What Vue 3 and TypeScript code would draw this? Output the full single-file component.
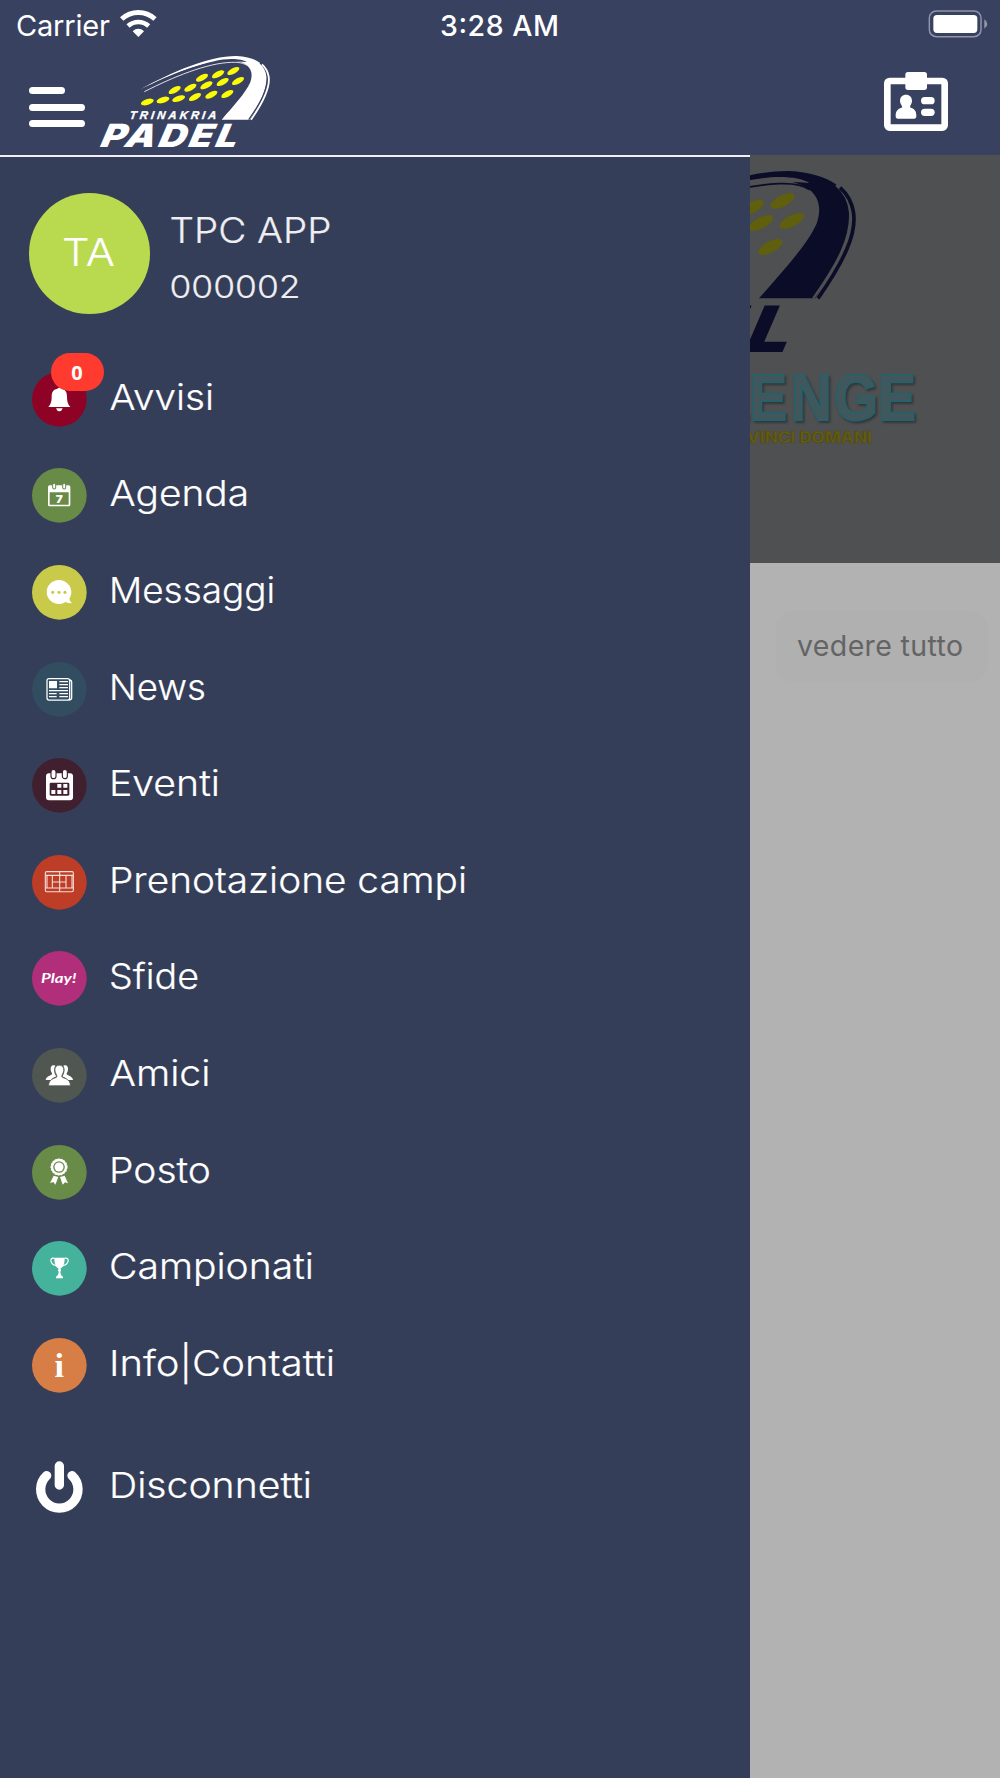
<script setup lang="ts">
interface MenuItem {
  id: string
  label: string
  color: string
  x: number
  width: number
}

const items: MenuItem[] = [
  { id: 'bell', label: 'Avvisi', color: '#8e0325', x: 9.5, width: 104.5 },
  { id: 'agenda', label: 'Agenda', color: '#698b48', x: 9.5, width: 139.5 },
  { id: 'chat', label: 'Messaggi', color: '#caca4a', x: 9, width: 166 },
  { id: 'news', label: 'News', color: '#324d60', x: 9, width: 97 },
  { id: 'events', label: 'Eventi', color: '#40202f', x: 9, width: 111 },
  { id: 'court', label: 'Prenotazione campi', color: '#be3d27', x: 9, width: 358 },
  { id: 'play', label: 'Sfide', color: '#b12f7a', x: 9, width: 90 },
  { id: 'friends', label: 'Amici', color: '#505650', x: 9.5, width: 101 },
  { id: 'medal', label: 'Posto', color: '#698b48', x: 9, width: 102 },
  { id: 'cup', label: 'Campionati', color: '#45b29b', x: 9, width: 205 },
  { id: 'info', label: 'Info|Contatti', color: '#d67e46', x: 9, width: 226 },
]

const balls: [number, number][] = [
  [172, 171], [219, 165], [266, 161], [315, 156], [364, 149], [412, 147],
  [254, 135], [301, 128], [349, 121], [398, 111], [444, 108],
  [336, 98], [384, 88], [430, 78],
]

const prize = { title: 'LENGE', note: 'VINCI DOMANI' }
</script>

<template>
  <div class="screen">
    <svg width="0" height="0" class="defs">
      <defs>
        <g id="racket">
          <path class="body" d="M150 134C245 80 360 32 440 33C505 37 535 62 531 105C526 146 505 180 479 224H395C430 184 466 145 481 112C494 74 474 51 425 46C350 46 248 85 150 134Z" />
          <path class="cut" d="M158 132C255 83 360 42 425 42C445 42 462 45 470 51C370 40 270 86 158 132Z" />
          <path class="line" d="M163 140C250 96 350 54 425 52C447 51 462 55 470 61" />
          <path class="cut wide" d="M476 224C514 170 533 133 531 95C529 75 521 63 510 54" />
          <path class="line thick" d="M483 224C522 168 541 127 536 95C533 76 525 66 516 58" />
          <ellipse v-for="(b, i) in balls" :key="i" class="ball" rx="20" ry="8.5"
            :transform="`translate(${b[0]} ${b[1]}) rotate(${i < 3 ? -18 : -28})`" />
          <text class="padel" x="0" y="0" textLength="418" lengthAdjust="spacingAndGlyphs" transform="translate(29 305) skewX(-13)">PADEL</text>
        </g>
      </defs>
    </svg>

    <header class="top">
      <div class="status">
        <div class="carrier">
          <svg width="104" height="44"><text x="16" y="35.5" textLength="94" class="st">Carrier</text></svg>
          <svg class="wifi" viewBox="0 0 110 82" width="36.7" height="27.3">
            <path d="M5 27C34 1 76 1 105 27" fill="none" stroke="#fff" stroke-width="15" />
            <path d="M24 48C42 32 68 32 86 48" fill="none" stroke="#fff" stroke-width="14" />
            <path d="M38 64C48 54 62 54 72 64L55 81Z" fill="#fff" />
          </svg>
        </div>
        <svg class="clock" width="124" height="44"><text x="1" y="35.5" textLength="119" class="st time">3:28 AM</text></svg>
        <svg class="battery" viewBox="0 0 180 84" width="60" height="28">
          <rect x="4" y="3" width="155" height="77" rx="21" fill="none" stroke="#8f95a6" stroke-width="4.5" />
          <rect x="16" y="15" width="132" height="54" rx="11" fill="#fff" />
          <path d="M169 28Q178 34 178 42T169 56Z" fill="#9499aa" />
        </svg>
      </div>
      <div class="bar">
        <div class="burger"><i class="short"></i><i></i><i></i></div>
        <svg class="logo" viewBox="0 0 570 330" width="190" height="110">
          <use href="#racket" />
          <text class="tri" textLength="260" transform="translate(118 223) skewX(-8)">TRINAKRIA</text>
        </svg>
        <svg class="card" viewBox="0 0 192 177" width="64" height="59">
          <rect x="10" y="27" width="172" height="140" rx="7" fill="none" stroke="#fff" stroke-width="20" />
          <rect x="64" y="0" width="65" height="54" rx="8" fill="#fff" />
          <path d="M48 87C48 75 55 68 66 68S84 75 84 87C84 95 79 98 78 106C91 111 97 116 97 132Q97 140 90 140H42Q35 140 35 132C35 116 42 111 55 106C53 98 48 95 48 87Z" fill="#fff" />
          <rect x="111" y="75" width="41" height="22" rx="11" fill="#fff" />
          <rect x="111" y="110" width="41" height="22" rx="11" fill="#fff" />
        </svg>
      </div>
    </header>

    <main class="below">
      <aside class="drawer">
        <div class="profile">
          <div class="avatar">
            <svg width="121" height="121"><text x="33" y="73" textLength="53" lengthAdjust="spacingAndGlyphs" class="label initials">TA</text></svg>
          </div>
          <svg class="who" width="300" height="121">
            <text x="19.5" y="50.2" textLength="162" lengthAdjust="spacingAndGlyphs" class="label">TPC APP</text>
            <text x="19.500" y="104.500" textLength="131" lengthAdjust="spacingAndGlyphs" class="label code">000002</text>
          </svg>
        </div>

        <nav>
          <div v-for="it in items" :key="it.id" class="row">
            <div class="icon">
              <svg viewBox="-82 -82 164 164" width="54.7" height="54.7" fill="#fff">
                <circle r="82" :fill="it.color" />
                <g v-if="it.id === 'bell'">
                  <path d="M-6 -32Q0 -38 6 -32C19 -29 23 -21 23 -8C23 8 26 14 33 23H-33C-26 14 -23 8 -23 -8C-23 -21 -19 -29 -6 -32Z" />
                  <path d="M-10 27H10Q7 36 0 36T-10 27Z" />
                </g>
                <g v-else-if="it.id === 'agenda'">
                  <path fill-rule="evenodd" d="M-29 -30H28Q33 -30 33 -25V28Q33 33 28 33H-29Q-34 33 -34 28V-25Q-34 -30 -29 -30ZM-29 -9V28.500H28V-9Z" />
                  <g :stroke="it.color" stroke-width="3"><rect x="-20" y="-36" width="9" height="17" rx="4.500" /><rect x="10" y="-36" width="9" height="17" rx="4.500" /></g>
                  <text class="seven" x="-11" y="22" textLength="21" lengthAdjust="spacingAndGlyphs">7</text>
                </g>
                <g v-else-if="it.id === 'chat'">
                  <path d="M-1 -37C20 -37 36 -20 36 0C36 8 33 14 30 19Q31 27 38 33Q27 33 18 29C12 33 6 35 -1 35C-21 35 -38 19 -38 -1S-21 -37 -1 -37Z" />
                  <g :fill="it.color"><circle cx="-20" r="4.6" /><circle cx="-1" r="4.6" /><circle cx="17" r="4.6" /></g>
                </g>
                <g v-else-if="it.id === 'news'" fill="none" stroke="#fff" stroke-width="3.8">
                  <rect x="-37" y="-32" width="68" height="64" rx="6" />
                  <path d="M30 -28Q37 -28 37 -21V25Q37 32 28 32" />
                  <path fill="#fff" d="M-29 -23H-9V-5H-29Z" />
                  <path d="M0 -23H26M0 -14H26M0 -5H26M-31 4H26M-31 13H-8M0 13H26M-31 22H-8M0 22H26" />
                </g>
                <g v-else-if="it.id === 'events'">
                  <rect x="-40" y="-36" width="81" height="81" rx="9" />
                  <g :stroke="it.color" stroke-width="3.5"><rect x="-25" y="-48" width="15" height="28" rx="7.5" /><rect x="9" y="-48" width="15" height="28" rx="7.5" /></g>
                  <rect x="-29" y="-8" width="59" height="39" rx="4" :fill="it.color" />
                  <path d="M-6 -4H6V7H-6ZM12 -4H24V7H12ZM-24 14H-12V26H-24ZM-6 14H6V26H-6ZM12 14H24V26H12Z" />
                </g>
                <g v-else-if="it.id === 'court'" fill="none" stroke="#f7ddd8" stroke-width="3.3">
                  <rect x="-42" y="-32" width="84" height="60" rx="4" />
                  <path d="M-42 -21H42M-42 17H42M-21 -21V17M20 -21V17M1 -32V28M-21 -1H20M-37 -21V17M38 -21V17" />
                </g>
                <text v-else-if="it.id === 'play'" class="play" x="-55" y="15" textLength="106" lengthAdjust="spacingAndGlyphs">Play!</text>
                <g v-else-if="it.id === 'friends'">
                  <path d="M-12 -29C-21 -33 -27 -28 -26 -17C-25 -9 -21 -7 -22 -3C-26 2 -40 3 -41 14H-25C-20 7 -14 6 -9 3C-16 -6 -18 -20 -12 -29Z" />
                  <path d="M12 -29C21 -33 27 -28 26 -17C25 -9 21 -7 22 -3C26 2 40 3 41 14H25C20 7 14 6 9 3C16 -6 18 -20 12 -29Z" />
                  <path d="M0 -30C9 -30 14 -24 13 -14C12 -7 8 -4 7 4C13 11 33 8 33 31H-32C-32 8 -12 11 -7 4C-8 -4 -12 -7 -13 -14C-14 -24 -9 -30 0 -30Z" :stroke="it.color" stroke-width="2" />
                </g>
                <g v-else-if="it.id === 'medal'">
                  <circle cx="-1" cy="-16" r="21" fill="none" stroke="#fff" stroke-width="7" />
                  <circle cx="-1" cy="-16" r="24" fill="none" stroke="#fff" stroke-width="3" stroke-dasharray="6 3" />
                  <circle cx="-1" cy="-16" r="13.5" />
                  <path d="M-17 10L-3 14L-12 37L-18 29L-28 32ZM16 10L2 14L10 37L17 30L26 33Z" />
                </g>
                <g v-else-if="it.id === 'cup'">
                  <path d="M-15 -32H16C16 -14 12 -4 4 0V4H5V9H3C3 16 5 22 11 25V30H-10V25C-4 22 -2 16 -2 9H-4V4H-3V0C-11 -4 -15 -14 -15 -32Z" />
                  <path d="M-15 -30C-31 -34 -29 -13 -9 -7M16 -30C32 -34 30 -13 10 -7" fill="none" stroke="#fff" stroke-width="3.5" />
                </g>
                <text v-else class="info" x="0" y="35" text-anchor="middle">i</text>
              </svg>
              <span v-if="it.id === 'bell'" class="badge">0</span>
            </div>
            <svg class="text" width="500" height="96.6">
              <text :x="it.x" y="58.6" :textLength="it.width" lengthAdjust="spacingAndGlyphs" class="label">{{ it.label }}</text>
            </svg>
          </div>

          <div class="row logout">
            <div class="icon">
              <svg viewBox="-82 -82 164 164" width="54.7" height="54.7" fill="none" stroke="#fff" stroke-width="28" stroke-linecap="round">
                <path d="M0 -64V-7M-38 -35A56 56 0 1 0 38 -35" />
              </svg>
            </div>
            <svg class="text" width="500" height="96.6">
              <text x="9" y="58.6" textLength="203" lengthAdjust="spacingAndGlyphs" class="label">Disconnetti</text>
            </svg>
          </div>
        </nav>
      </aside>

      <section class="content">
        <div class="banner">
          <svg class="promo" viewBox="0 0 750 1221" width="250" height="407">
            <use href="#racket" transform="translate(-767 -18) scale(2.01 2)" />
            <g transform="translate(-60 -45)">
              <text class="prize" transform="translate(0 841) scale(0.86 1)" x="-52 68 213 364 517">{{ prize.title }}</text>
              <text class="note" x="50" y="910" textLength="376" lengthAdjust="spacingAndGlyphs">{{ prize.note }}</text>
            </g>
          </svg>
        </div>
        <button class="all"><svg width="212" height="71"><text x="21" y="45" textLength="166">vedere tutto</text></svg></button>
      </section>
    </main>
  </div>
</template>

<style>
body { margin: 0; background: #b2b2b2; }
</style>

<style scoped>
.screen { width: 1000px; height: 1778px; overflow: hidden; font-family: Inter, "Liberation Sans", sans-serif; display: flex; flex-direction: column; }
.defs { position: absolute; }
svg { display: block; overflow: visible; flex: none; }
.top { height: 155px; background: #38415f; flex: none; color: #fff; }
.status { height: 44px; display: flex; }
.carrier { display: flex; width: 439px; flex: none; }
.wifi { margin: 10px 0 0 16px; }
.clock { margin-right: 364.5px; }
.battery { margin-top: 10.3px; }
.st { font-size: 29px; fill: #fff; }
.time { font-weight: 500; font-size: 28.5px; }
.bar { display: flex; height: 111px; align-items: flex-start; }
.burger { width: 56px; margin: 43px 0 0 29px; display: flex; flex-direction: column; gap: 9.7px; }
.burger i { height: 7px; border-radius: 4px; background: #fff; width: 56px; }
.burger .short { width: 36px; }
.logo { margin: 1px 0 0 5px; --body: #fff; --cut: #38415f; --ball: #fbfb05; }
.promo { --body: #0a0c28; --cut: #4f5051; --ball: #5f5f0d; }
.card { margin: 28.3px 0 0 603.5px; }
.body { fill: var(--body); }
.cut { fill: var(--cut); }
.cut.wide { fill: none; stroke: var(--cut); stroke-width: 3.5; }
.line { fill: none; stroke: var(--body); stroke-width: 2.5; }
.line.thick { stroke-width: 5.5; }
.ball { fill: var(--ball); }
.padel { font-family: Inter, sans-serif; font-size: 96px; font-weight: 900; font-style: italic; letter-spacing: 7px; fill: var(--body); }
.tri { font-family: "Liberation Sans", sans-serif; font-size: 34px; font-weight: 700; font-style: italic; fill: #fff; stroke: #fff; stroke-width: 1; }
.below { flex: 1; display: flex; min-height: 0; }
.drawer { width: 749.5px; flex: none; box-sizing: border-box; border-top: 2px solid #f1eef5; background: #353e58; position: relative; z-index: 1; }
.profile { display: flex; padding: 36px 0 0 29.4px; height: 157.7px; }
.avatar { width: 120.6px; height: 120.6px; border-radius: 50%; background: #b9d94e; }
.label { font-size: 35.2px; font-weight: 300; fill: #fff; stroke: #fff; stroke-width: 0.2; }
.initials { font-size: 38.5px; }
.who .label { fill: #efeff3; stroke: #efeff3; }
.who .code { font-size: 31px; }
.row { display: flex; align-items: center; height: 96.63px; padding-left: 32px; }
.icon { position: relative; margin-right: 13.3px; }
.badge { position: absolute; left: 19px; top: -19px; width: 53px; height: 38px; border-radius: 19px; background: #ff3b30; color: #fff; font: 700 20px/39px "Open Sans", sans-serif; text-align: center; text-indent: -1px; }
.logout { margin-top: 25px; }
.seven { font: 900 33px Inter, sans-serif; }
.play { font: italic 700 42px Lato, sans-serif; }
.info { font: 700 103px "Liberation Serif", serif; }
.content { flex: 1; background: #b2b2b2; overflow: hidden; }
.banner { height: 407.5px; background: #4f5051; overflow: hidden; }
.prize { font: 700 196px "Liberation Sans", sans-serif; fill: #41575c; stroke: #2a6069; stroke-width: 6; filter: drop-shadow(6px 6px 3px #2f383b); }
.note { font: 800 48px Inter, sans-serif; fill: #655c0c; stroke: #4b4823; stroke-width: 2; }
.all { display: block; margin: 48px 0 0 26.5px; padding: 0; width: 212px; height: 71px; border: 0; border-radius: 18px; background: #b0b0b0; font-family: inherit; }
.all text { font-size: 28.5px; fill: #646464; }
</style>
